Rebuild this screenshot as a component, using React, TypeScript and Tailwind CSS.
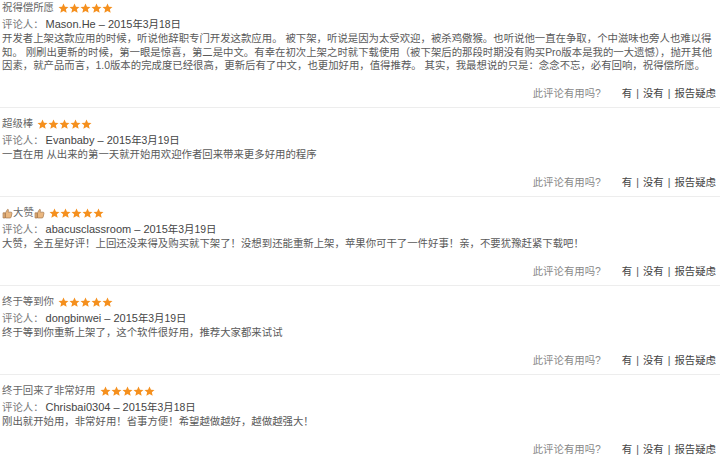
const reviews = [
  {
    title: "祝得偿所愿",
    author: "Mason.He",
    date: "2015年3月18日",
    lines: [
      "开发者上架这款应用的时候，听说他辞职专门开发这款应用。 被下架，听说是因为太受欢迎，被杀鸡儆猴。也听说他一直在争取，个中滋味也旁人也难以得",
      "知。 刚刷出更新的时候，第一眼是惊喜，第二是中文。有幸在初次上架之时就下载使用（被下架后的那段时期没有购买Pro版本是我的一大遗憾），抛开其他",
      "因素，就产品而言，1.0版本的完成度已经很高，更新后有了中文，也更加好用，值得推荐。 其实，我最想说的只是：念念不忘，必有回响，祝得偿所愿。",
    ],
  },
  {
    title: "超级棒",
    author: "Evanbaby",
    date: "2015年3月19日",
    lines: ["一直在用 从出来的第一天就开始用欢迎作者回来带来更多好用的程序"],
  },
  {
    title: "大赞",
    thumbs: true,
    author: "abacusclassroom",
    date: "2015年3月19日",
    lines: ["大赞，全五星好评！上回还没来得及购买就下架了！没想到还能重新上架，苹果你可干了一件好事！亲，不要犹豫赶紧下载吧！"],
  },
  {
    title: "终于等到你",
    author: "dongbinwei",
    date: "2015年3月19日",
    lines: ["终于等到你重新上架了，这个软件很好用，推荐大家都来试试"],
  },
  {
    title: "终于回来了非常好用",
    author: "Chrisbai0304",
    date: "2015年3月18日",
    lines: ["刚出就开始用，非常好用！省事方便！希望越做越好，越做越强大！"],
  },
];

function Star() {
  return (
    <svg width="11" height="11" viewBox="0 0 24 24">
      <path
        d="M12 1l3.2 7.1 7.7.7-5.8 5.1 1.8 7.6L12 17.5l-6.9 4 1.8-7.6-5.8-5.1 7.7-.7z"
        fill="#f5901e"
      />
    </svg>
  );
}

function Thumb() {
  return (
    <svg width="11" height="11" viewBox="0 0 16 16" className="inline-block">
      <path
        d="M1.5 7h3v7.5h-3z M5 7.2l2.6-4.6c.3-.6.8-.9 1.3-.6.6.3.7.9.5 1.6L8.8 6h4.4c.9 0 1.5.8 1.3 1.6l-1.2 5.6c-.2.8-.8 1.3-1.6 1.3H5z"
        fill="#eab77f"
        stroke="#9a6a3e"
        strokeWidth="0.9"
        strokeLinejoin="round"
      />
    </svg>
  );
}

export default function App() {
  return (
    <div className="w-[720px] h-[459px] overflow-hidden bg-white font-['Liberation_Sans','Noto_Sans_CJK_SC',sans-serif] text-[10.4px]">
      {reviews.map((r, i) => (
        <div
          key={r.author}
          className={`pl-[2px] pr-[4px] ${i === 0 ? "pt-0" : "pt-[8px]"} ${
            i < reviews.length - 1 ? "border-b border-[#ededed] pb-[5.5px]" : ""
          }`}
        >
          <div className="flex items-center h-[16px] text-[#666]">
            {r.thumbs && <Thumb />}
            <span>{r.title}</span>
            {r.thumbs && <Thumb />}
            <span className="ml-[4px] flex items-center">
              <Star />
              <Star />
              <Star />
              <Star />
              <Star />
            </span>
          </div>
          <div className="h-[16px] leading-[16px] text-[#777] whitespace-nowrap">
            评论人：
            <span className="ml-[2px] text-[11px] text-[#444]">
              {r.author} – 2015
            </span>
            <span className="text-[#444]">{r.date.slice(4)}</span>
          </div>
          <div className="leading-[13.5px] text-[#5a5a5a]">
            {r.lines.map((l) => (
              <div key={l} className="whitespace-nowrap">
                {l}
              </div>
            ))}
          </div>
          <div className="mt-[13px] h-[16px] leading-[16px] flex justify-end whitespace-nowrap">
            <span className="text-[#888]">此评论有用吗?</span>
            <span className="ml-[21px] text-[#444]">有</span>
            <span className="mx-[4px] text-[#555]">|</span>
            <span className="text-[#444]">没有</span>
            <span className="mx-[4px] text-[#555]">|</span>
            <span className="text-[#444]">报告疑虑</span>
          </div>
        </div>
      ))}
    </div>
  );
}
